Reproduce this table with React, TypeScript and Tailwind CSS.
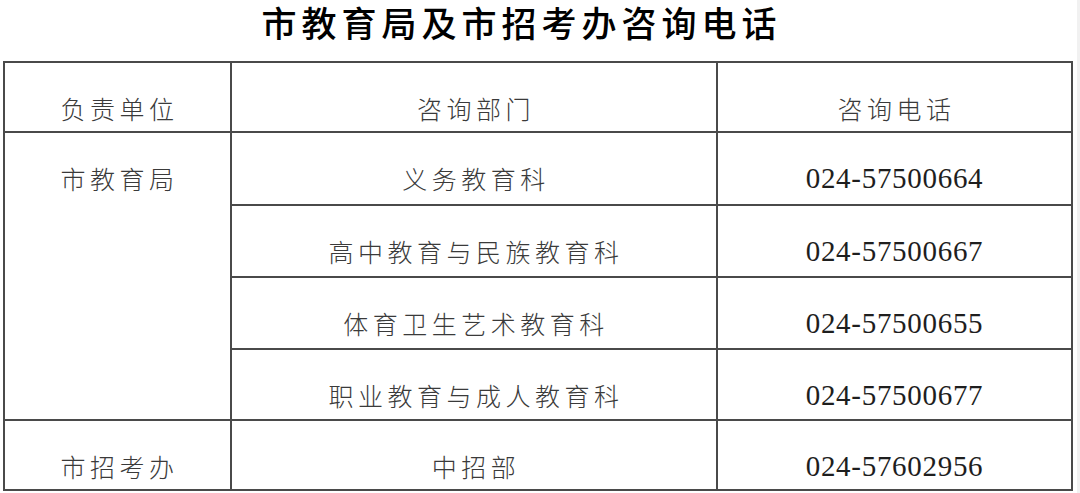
const cjk = "font-['Noto_Sans_CJK_SC',sans-serif]";

const eduRows = [
  { dept: "义务教育科", phone: "024-57500664", h: "h-[73px]" },
  { dept: "高中教育与民族教育科", phone: "024-57500667", h: "h-[72px]" },
  { dept: "体育卫生艺术教育科", phone: "024-57500655", h: "h-[72px]" },
  { dept: "职业教育与成人教育科", phone: "024-57500677", h: "h-[71px]" },
];

function Label({ children }: { children: React.ReactNode }) {
  return (
    <span
      className={`${cjk} pl-[4px] text-[25px] font-light leading-[32px] tracking-[4.5px] text-[#3a3a3a]`}
    >
      {children}
    </span>
  );
}

function Phone({ children }: { children: React.ReactNode }) {
  return (
    <span className="font-['Liberation_Serif',serif] text-[29px] leading-[32px] tracking-[0.7px] text-[#1e1e1e]">
      {children}
    </span>
  );
}

export default function App() {
  const cell = "border-2 border-[#4a4a4a] p-0 pt-[29px] text-center align-top";

  return (
    <div className="flex h-[493px] w-[1080px] overflow-hidden bg-white">
      <div className="flex-1">
        <h1
          className={`${cjk} h-[61px] pt-[2px] pr-[34px] text-center text-[35px] font-medium leading-[40px] tracking-[5px] text-black`}
        >
          市教育局及市招考办咨询电话
        </h1>

        <table className="ml-[3px] w-[1070px] table-fixed border-collapse border-2 border-[#4a4a4a]">
          <colgroup>
            <col className="w-[227px]" />
            <col className="w-[486px]" />
            <col />
          </colgroup>
          <tbody>
            <tr className="h-[70px]">
              <td className={cell}>
                <Label>负责单位</Label>
              </td>
              <td className={cell}>
                <Label>咨询部门</Label>
              </td>
              <td className={cell}>
                <Label>咨询电话</Label>
              </td>
            </tr>

            {eduRows.map((r, i) => (
              <tr key={r.phone} className={r.h}>
                {i === 0 && (
                  <td rowSpan={4} className={cell}>
                    <Label>市教育局</Label>
                  </td>
                )}
                <td className={cell}>
                  <Label>{r.dept}</Label>
                </td>
                <td className={cell}>
                  <Phone>{r.phone}</Phone>
                </td>
              </tr>
            ))}

            <tr className="h-[70px]">
              <td className={cell}>
                <Label>市招考办</Label>
              </td>
              <td className={cell}>
                <Label>中招部</Label>
              </td>
              <td className={cell}>
                <Phone>024-57602956</Phone>
              </td>
            </tr>
          </tbody>
        </table>
      </div>
      <div className="w-[3px] bg-[#f1f1f1]" />
    </div>
  );
}
